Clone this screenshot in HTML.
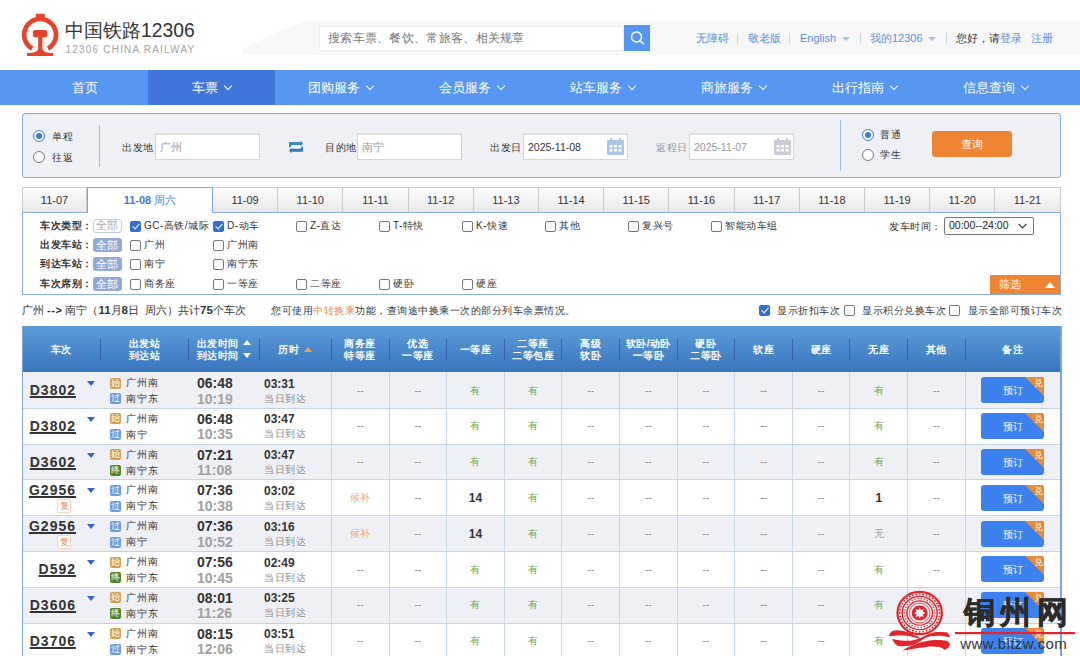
<!DOCTYPE html>
<html><head><meta charset="utf-8">
<style>
*{box-sizing:border-box;margin:0;padding:0}
html,body{width:1080px;height:656px;overflow:hidden;background:#fff}
body{position:relative;font-family:"Liberation Sans",sans-serif;color:#333;font-size:11px}
.abs{position:absolute}
/* header */
#logo-cn{position:absolute;left:65px;top:18px;font-size:19.3px;color:#333;font-weight:500;line-height:26px;white-space:nowrap}
#logo-en{position:absolute;left:65.5px;top:44px;font-size:10px;color:#a3a3a3;letter-spacing:1.2px;line-height:12px;white-space:nowrap}
#band{position:absolute;left:0;top:0}
#search{position:absolute;left:319px;top:26px;width:305px;height:25px;background:#fff;border:1px solid #eee;font-size:12px;letter-spacing:0.3px;color:#777;line-height:22px;padding-left:8px}
#sbtn{position:absolute;left:624px;top:25px;width:26px;height:26px;background:#5596f0}
.tl{position:absolute;top:32px;font-size:11px;line-height:13px;color:#5b8fdc;white-space:nowrap}
.sep{position:absolute;top:33px;width:1px;height:11px;background:#c7d6ee}
.tri{position:absolute;top:37px;width:0;height:0;border-left:4px solid transparent;border-right:4px solid transparent;border-top:4px solid #a9c2ec}
/* nav */
#nav{position:absolute;left:0;top:70px;width:1080px;height:35px;background:#5697f3}
.ni{position:absolute;top:0;height:35px;line-height:35px;color:#fff;font-size:13px;text-align:center;white-space:nowrap}
.ni.act{background:#4076dc}
.chev{display:inline-block;width:6px;height:6px;border-right:1.4px solid #fff;border-bottom:1.4px solid #fff;transform:rotate(45deg);margin-left:7px;position:relative;top:-3px}

/* form */
#form{position:absolute;left:22px;top:113px;width:1039px;height:65px;background:#eff0f5;border:1.5px solid #86ade0;border-radius:3px}
.radio{position:absolute;width:12px;height:12px;border-radius:50%;border:1px solid #777;background:#fff}
.radio.on{border:1px solid #3a7ad8}
.radio.on:after{content:"";position:absolute;left:2px;top:2px;width:6px;height:6px;border-radius:50%;background:#3a7ad8}
.lbl{position:absolute;font-size:10px;letter-spacing:0.5px;line-height:13px;color:#333;white-space:nowrap}
.vdiv{position:absolute;width:1.2px;background:#93bce6}
.inp{position:absolute;height:27px;background:#fff;border:1px solid #d4d4d4;border-top:2px solid #dedede;font-size:10.5px;line-height:24px;padding-left:4px;color:#999;white-space:nowrap}
.cal{position:absolute;width:17px;height:17px}
#qbtn{position:absolute;left:932px;top:131px;width:80px;height:26px;background:#ef8532;border-radius:3px;color:#fff;font-size:11px;text-align:center;line-height:26px}
/* date tabs */
.dt{position:absolute;top:187px;height:26px;border:1px solid #c9c9c9;border-bottom-color:#86ade0;border-left:none;background:linear-gradient(#fdfdfd,#e8e8e8);font-size:11px;line-height:24px;text-align:center;color:#333}
.dt.first{border-left:1px solid #c9c9c9}
.dt.act{background:#fff;border:1px solid #7ea8d8;border-bottom:none;color:#3c7ec9;font-weight:bold;height:26px}
#filter{position:absolute;left:22px;top:212px;width:1039px;height:83px;border:1px solid #86ade0;border-top:none;background:#fff}
.flbl{position:absolute;left:40px;font-size:10px;letter-spacing:0.5px;line-height:13px;color:#333;font-weight:bold;white-space:nowrap}
.all{position:absolute;left:92.5px;width:29px;height:14px;background:#93a9d9;color:#fff;font-size:10.5px;line-height:14px;text-align:center;border-radius:3px;margin-top:-1px}
.all.o{background:#fff;border:1.5px solid #bfcbed;color:#aaa;line-height:11px}
.cb{position:absolute;width:11px;height:11px;border:1px solid #767676;border-radius:2px;background:#fff}
.cb.on{background:#2f6fd6;border-color:#2f6fd6}
.cb.on:after{content:"";position:absolute;left:2.6px;top:0px;width:3.2px;height:6px;border-right:1.8px solid #fff;border-bottom:1.8px solid #fff;transform:rotate(42deg)}
.ct{position:absolute;font-size:10px;letter-spacing:0.5px;line-height:13px;color:#333;white-space:nowrap}
#sel{position:absolute;left:944px;top:217px;width:90px;height:18px;border:1px solid #767676;border-radius:2px;font-size:10.5px;line-height:15px;padding-left:4px;color:#222;background:#fff}
#shai{position:absolute;left:990px;top:275px;width:70px;height:19px;background:#ef8532;color:#fff;font-size:11px;line-height:19px;padding-left:9px}
/* summary */
.sum{position:absolute;top:304px;font-size:10px;letter-spacing:0.5px;line-height:13px;color:#333;white-space:nowrap}

/* table */
#th{position:absolute;left:22px;top:326px;width:1039px;height:46px;background:linear-gradient(#5a9cd9,#3a76be)}
.thc{position:absolute;top:326px;height:46px;display:flex;align-items:center;justify-content:center;text-align:center;color:#fff;font-size:10px;letter-spacing:0.5px;line-height:12.5px;font-weight:bold;white-space:nowrap;padding-top:2px}
.ths{position:absolute;top:339px;width:1px;height:21px;background:#3a61a6}
.row{position:absolute;left:22px;width:1039px}
.hl{position:absolute;left:22px;width:1039px;height:1px;background:#c3d5e2}
.row.g{background:#eff0f5}
.vl{position:absolute;top:372px;width:1px;height:284px;background:#c5d6e6}
.tn{position:absolute;font-size:14px;font-weight:bold;color:#333;text-decoration:underline;text-decoration-thickness:1.5px;text-underline-offset:0.5px;letter-spacing:1px;line-height:16px;white-space:nowrap}
.dtri{position:absolute;width:0;height:0;border-left:4.5px solid transparent;border-right:4.5px solid transparent;border-top:5px solid #2e66d8}
.bdg{position:absolute;left:110px;width:11px;height:11px;border-radius:2px;color:#fff;font-size:9px;line-height:11px;text-align:center;overflow:hidden}
.bs{background:#d1a155}.bz{background:#6b9ddd}.be{background:#54852d}
.st{position:absolute;left:126px;font-size:10px;line-height:13px;color:#333;white-space:nowrap;letter-spacing:1px}
.tm{position:absolute;left:197px;font-size:14px;font-weight:bold;line-height:15px;color:#333;white-space:nowrap}
.tm.a{color:#a0a0a0}
.du{position:absolute;left:264px;font-size:12px;font-weight:bold;line-height:14px;color:#333;white-space:nowrap}
.du.a{font-weight:normal;font-size:10px;letter-spacing:0.5px;color:#888}
.fu{position:absolute;left:57px;width:14px;height:14px;border:1px solid #f6d3b3;border-radius:2px;color:#f08a50;font-size:9px;line-height:12px;text-align:center;background:#fff}
.sc{position:absolute;width:57.7px;text-align:center;font-size:10px;line-height:13px;white-space:nowrap}
.sc.n{color:#888;font-size:10px}
.sc.y{color:#6aaa4a}
.sc.h{color:#f0a070}
.sc.w{color:#999}
.sc.b{color:#333;font-weight:bold;font-size:12px;margin-top:1px}
.bk{position:absolute;left:981px;width:63px;height:26px;background:#3b82f0;border-radius:3px;overflow:hidden;color:#fff;font-size:10px;line-height:28px;text-align:center}
.bk i{position:absolute;right:0;top:0;width:0;height:0;border-top:19px solid #ea8a35;border-left:19px solid transparent}
.bk b{position:absolute;right:1.5px;top:-8px;font-weight:normal;font-size:9px;color:#fff}
.up,.dn{display:inline-block;width:0;height:0;border-left:4.5px solid transparent;border-right:4.5px solid transparent;margin-left:4px;vertical-align:middle;position:relative;top:-1px}
.up{border-bottom:5px solid #fff}
.dn{border-top:5px solid #fff}
</style></head><body>

<!-- header band -->
<svg id="band" width="1080" height="70" viewBox="0 0 1080 70">
  <path d="M1080 21 L318 21 C300 21 290 26 250 45 C238 51 240 55 248 55 L1080 55 Z" fill="#f7f7f7"/>
</svg>
<!-- logo -->
<svg class="abs" style="left:18px;top:10px" width="46" height="50" viewBox="0 0 46 50">
  <g fill="#e5432a">
  <path d="M12.95 40.65 A18.3 18.3 0 1 1 31.25 40.65 L28.9 36.58 A13.6 13.6 0 1 0 15.3 36.58 Z"/>
  <path d="M17.9 3.8 L26.7 3.8 L26.9 8.5 L17.7 8.5 Z"/>
  <rect x="14.85" y="20" width="14.45" height="7.2" rx="2"/>
  <path d="M20.2 26 L24.4 26 L24.4 38.5 C24.6 41.8 28.5 42.9 35.2 43.1 L35.2 46 L9 46 L9 43.1 C15.7 42.9 20 41.8 20.2 38.5 Z"/>
  </g>
</svg>
<div id="logo-cn">中国铁路12306</div>
<div id="logo-en">12306 CHINA RAILWAY</div>

<div id="search">搜索车票、餐饮、常旅客、相关规章</div>
<div id="sbtn"><svg width="26" height="26" viewBox="0 0 26 26"><circle cx="12.5" cy="12" r="5" fill="none" stroke="#fff" stroke-width="1.5"/><path d="M16.2 15.7 L19.5 19" stroke="#fff" stroke-width="1.6" stroke-linecap="round"/></svg></div>

<div class="tl" style="left:696px">无障碍</div>
<div class="sep" style="left:737px"></div>
<div class="tl" style="left:748px">敬老版</div>
<div class="sep" style="left:789px"></div>
<div class="tl" style="left:800px">English</div>
<div class="tri" style="left:842px"></div>
<div class="sep" style="left:860px"></div>
<div class="tl" style="left:870px">我的12306</div>
<div class="tri" style="left:928px"></div>
<div class="sep" style="left:946px"></div>
<div class="tl" style="left:956px;color:#333">您好，请<span style="color:#5b8fdc">登录</span></div>
<div class="tl" style="left:1031px">注册</div>

<div id="nav">
  <div class="ni" style="left:22px;width:126px">首页</div>
  <div class="ni act" style="left:148px;width:127px">车票<i class="chev"></i></div>
  <div class="ni" style="left:275px;width:131px">团购服务<i class="chev"></i></div>
  <div class="ni" style="left:406px;width:131px">会员服务<i class="chev"></i></div>
  <div class="ni" style="left:537px;width:131px">站车服务<i class="chev"></i></div>
  <div class="ni" style="left:668px;width:131px">商旅服务<i class="chev"></i></div>
  <div class="ni" style="left:799px;width:131px">出行指南<i class="chev"></i></div>
  <div class="ni" style="left:930px;width:131px">信息查询<i class="chev"></i></div>
</div>


<div id="form"></div>
<div class="radio on" style="left:33px;top:130px"></div>
<div class="radio" style="left:33px;top:151px"></div>
<div class="lbl" style="left:52px;top:130px">单程</div>
<div class="lbl" style="left:52px;top:151px">往返</div>
<div class="vdiv" style="left:99px;top:125px;height:42px"></div>
<div class="lbl" style="left:122px;top:141px">出发地</div>
<div class="inp" style="left:155px;top:133px;width:105px">广州</div>
<svg class="abs" style="left:283px;top:136px" width="26" height="22" viewBox="0 0 26 22"><defs><linearGradient id="sw" x1="0" y1="0" x2="0" y2="1"><stop offset="0" stop-color="#3f93cc"/><stop offset="1" stop-color="#2d74aa"/></linearGradient></defs><path fill="url(#sw)" d="M6 6 L17.5 6 L17.5 4.4 L20.1 7.5 L17.5 10.3 L17.5 9.1 L9.1 9.1 L6 12 Z M20.1 15.8 L8.4 15.8 L8.4 17.4 L6 14.5 L8.4 11.5 L8.4 12.7 L17.2 12.7 L20.1 9.8 Z"/></svg>
<div class="lbl" style="left:325px;top:141px">目的地</div>
<div class="inp" style="left:357px;top:133px;width:105px">南宁</div>
<div class="lbl" style="left:490px;top:141px">出发日</div>
<div class="inp" style="left:523px;top:133px;width:105px;color:#333">2025-11-08</div>
<svg class="cal" style="left:607px;top:138px" viewBox="0 0 17 17"><rect x="0" y="2" width="17" height="15" rx="1" fill="#a9c6e6"/><rect x="3" y="0" width="2" height="4" fill="#a9c6e6"/><rect x="12" y="0" width="2" height="4" fill="#a9c6e6"/><g fill="#fff"><rect x="2.5" y="7" width="3" height="2.5"/><rect x="7" y="7" width="3" height="2.5"/><rect x="11.5" y="7" width="3" height="2.5"/><rect x="2.5" y="11" width="3" height="2.5"/><rect x="7" y="11" width="3" height="2.5"/><rect x="11.5" y="11" width="3" height="2.5"/></g></svg>
<div class="lbl" style="left:656px;top:141px;color:#999">返程日</div>
<div class="inp" style="left:689px;top:133px;width:105px;color:#999">2025-11-07</div>
<svg class="cal" style="left:774px;top:138px" viewBox="0 0 17 17"><rect x="0" y="2" width="17" height="15" rx="1" fill="#c9ccd4"/><rect x="3" y="0" width="2" height="4" fill="#c9ccd4"/><rect x="12" y="0" width="2" height="4" fill="#c9ccd4"/><g fill="#fff"><rect x="2.5" y="7" width="3" height="2.5"/><rect x="7" y="7" width="3" height="2.5"/><rect x="11.5" y="7" width="3" height="2.5"/><rect x="2.5" y="11" width="3" height="2.5"/><rect x="7" y="11" width="3" height="2.5"/><rect x="11.5" y="11" width="3" height="2.5"/></g></svg>
<div class="vdiv" style="left:840px;top:120px;height:51px"></div>
<div class="radio on" style="left:862px;top:129px"></div>
<div class="radio" style="left:862px;top:149px"></div>
<div class="lbl" style="left:880px;top:128px">普通</div>
<div class="lbl" style="left:880px;top:148px">学生</div>
<div id="qbtn">查询</div>
<div id="filter"></div>
<div class="dt first" style="left:22px;width:65px">11-07</div>
<div class="dt act" style="left:87px;width:126px">11-08 <span style="font-weight:normal">周六</span></div>
<div class="dt" style="left:213.00px;width:65.2px">11-09</div>
<div class="dt" style="left:278.20px;width:65.2px">11-10</div>
<div class="dt" style="left:343.40px;width:65.2px">11-11</div>
<div class="dt" style="left:408.60px;width:65.2px">11-12</div>
<div class="dt" style="left:473.80px;width:65.2px">11-13</div>
<div class="dt" style="left:539.00px;width:65.2px">11-14</div>
<div class="dt" style="left:604.20px;width:65.2px">11-15</div>
<div class="dt" style="left:669.40px;width:65.2px">11-16</div>
<div class="dt" style="left:734.60px;width:65.2px">11-17</div>
<div class="dt" style="left:799.80px;width:65.2px">11-18</div>
<div class="dt" style="left:865.00px;width:65.2px">11-19</div>
<div class="dt" style="left:930.20px;width:65.2px">11-20</div>
<div class="dt" style="left:995.40px;width:65.2px">11-21</div>
<div class="flbl" style="top:219px">车次类型：</div>
<div class="all o" style="top:219.5px">全部</div>
<div class="flbl" style="top:238px">出发车站：</div>
<div class="all" style="top:238.5px">全部</div>
<div class="flbl" style="top:257px">到达车站：</div>
<div class="all" style="top:257.5px">全部</div>
<div class="flbl" style="top:277px">车次席别：</div>
<div class="all" style="top:277.5px">全部</div>
<div class="cb on" style="left:130px;top:220.5px"></div><div class="ct" style="left:144px;top:219px">GC-高铁/城际</div>
<div class="cb on" style="left:213px;top:220.5px"></div><div class="ct" style="left:227px;top:219px">D-动车</div>
<div class="cb" style="left:296px;top:220.5px"></div><div class="ct" style="left:310px;top:219px">Z-直达</div>
<div class="cb" style="left:379px;top:220.5px"></div><div class="ct" style="left:393px;top:219px">T-特快</div>
<div class="cb" style="left:462px;top:220.5px"></div><div class="ct" style="left:476px;top:219px">K-快速</div>
<div class="cb" style="left:545px;top:220.5px"></div><div class="ct" style="left:559px;top:219px">其他</div>
<div class="cb" style="left:628px;top:220.5px"></div><div class="ct" style="left:642px;top:219px">复兴号</div>
<div class="cb" style="left:711px;top:220.5px"></div><div class="ct" style="left:725px;top:219px">智能动车组</div>
<div class="cb" style="left:130px;top:239.5px"></div><div class="ct" style="left:144px;top:238px">广州</div>
<div class="cb" style="left:213px;top:239.5px"></div><div class="ct" style="left:227px;top:238px">广州南</div>
<div class="cb" style="left:130px;top:258.5px"></div><div class="ct" style="left:144px;top:257px">南宁</div>
<div class="cb" style="left:213px;top:258.5px"></div><div class="ct" style="left:227px;top:257px">南宁东</div>
<div class="cb" style="left:130px;top:278.5px"></div><div class="ct" style="left:144px;top:277px">商务座</div>
<div class="cb" style="left:213px;top:278.5px"></div><div class="ct" style="left:227px;top:277px">一等座</div>
<div class="cb" style="left:296px;top:278.5px"></div><div class="ct" style="left:310px;top:277px">二等座</div>
<div class="cb" style="left:379px;top:278.5px"></div><div class="ct" style="left:393px;top:277px">硬卧</div>
<div class="cb" style="left:462px;top:278.5px"></div><div class="ct" style="left:476px;top:277px">硬座</div>
<div class="lbl" style="left:889px;top:220px">发车时间：</div>
<div id="sel">00:00--24:00<svg class="abs" style="right:6px;top:5px" width="9" height="6" viewBox="0 0 9 6"><path d="M0.5 0.8 L4.5 4.8 L8.5 0.8" fill="none" stroke="#333" stroke-width="1.2"/></svg></div>
<div id="shai">筛选<svg class="abs" style="left:55px;top:7px" width="10" height="6" viewBox="0 0 10 6"><path d="M0 6 L5 0 L10 6 Z" fill="#fff"/></svg></div>
<div class="sum" style="left:22px;font-size:11px;letter-spacing:0px;top:303.5px">广州 <b style="letter-spacing:0.5px">--&gt;</b> 南宁（<b style="font-size:11.5px">11</b>月<b style="font-size:11.5px">8</b>日&nbsp; 周六）共计<b style="font-size:11.5px">75</b>个车次</div>
<div class="sum" style="left:271px">您可使用<span style="color:#f08a2e">中转换乘</span>功能，查询途中换乘一次的部分列车余票情况。</div>
<div class="cb on" style="left:759px;top:305px"></div><div class="sum" style="left:777px">显示折扣车次</div>
<div class="cb" style="left:843.5px;top:305px"></div><div class="sum" style="left:862px">显示积分兑换车次</div>
<div class="cb" style="left:949px;top:305px"></div><div class="sum" style="left:967.5px">显示全部可预订车次</div>
<div id="th"></div>
<div class="thc" style="left:22.00px;width:78.50px"><div>车次</div></div>
<div class="thc" style="left:100.50px;width:87.50px"><div>出发站<br>到达站</div></div>
<div class="ths" style="left:100.00px"></div>
<div class="thc" style="left:188.00px;width:71.50px"><div>出发时间<i class="up"></i><br>到达时间<i class="dn"></i></div></div>
<div class="ths" style="left:187.50px"></div>
<div class="thc" style="left:259.50px;width:71.90px"><div>历时<i class="up" style="border-bottom-color:#f0a050;margin-left:5px"></i></div></div>
<div class="ths" style="left:259.00px"></div>
<div class="thc" style="left:331.40px;width:57.62px"><div>商务座<br>特等座</div></div>
<div class="ths" style="left:330.90px"></div>
<div class="thc" style="left:389.02px;width:57.62px"><div>优选<br>一等座</div></div>
<div class="ths" style="left:388.52px"></div>
<div class="thc" style="left:446.64px;width:57.62px"><div>一等座</div></div>
<div class="ths" style="left:446.14px"></div>
<div class="thc" style="left:504.26px;width:57.62px"><div>二等座<br>二等包座</div></div>
<div class="ths" style="left:503.76px"></div>
<div class="thc" style="left:561.88px;width:57.62px"><div>高级<br>软卧</div></div>
<div class="ths" style="left:561.38px"></div>
<div class="thc" style="left:619.50px;width:57.62px"><div>软卧/动卧<br>一等卧</div></div>
<div class="ths" style="left:619.00px"></div>
<div class="thc" style="left:677.12px;width:57.62px"><div>硬卧<br>二等卧</div></div>
<div class="ths" style="left:676.62px"></div>
<div class="thc" style="left:734.74px;width:57.62px"><div>软座</div></div>
<div class="ths" style="left:734.24px"></div>
<div class="thc" style="left:792.36px;width:57.62px"><div>硬座</div></div>
<div class="ths" style="left:791.86px"></div>
<div class="thc" style="left:849.98px;width:57.62px"><div>无座</div></div>
<div class="ths" style="left:849.48px"></div>
<div class="thc" style="left:907.60px;width:57.62px"><div>其他</div></div>
<div class="ths" style="left:907.10px"></div>
<div class="thc" style="left:965.22px;width:94.78px"><div>备注</div></div>
<div class="ths" style="left:964.72px"></div>
<div class="row g" style="top:372.00px;height:36.80px"></div>
<div class="tn" style="right:1004px;top:382.20px">D3802</div>
<div class="dtri" style="left:86.5px;top:381.00px"></div>
<div class="bdg bs" style="top:377.60px">始</div>
<div class="bdg bz" style="top:393.40px">过</div>
<div class="st" style="top:376.00px">广州南</div>
<div class="st" style="top:392.00px">南宁东</div>
<div class="tm" style="top:376.00px">06:48</div>
<div class="tm a" style="top:391.50px">10:19</div>
<div class="du" style="top:376.50px">03:31</div>
<div class="du a" style="top:391.50px">当日到达</div>
<div class="sc n" style="left:331.40px;width:57.62px;top:383.50px">--</div>
<div class="sc n" style="left:389.02px;width:57.62px;top:383.50px">--</div>
<div class="sc y" style="left:446.64px;width:57.62px;top:383.50px">有</div>
<div class="sc y" style="left:504.26px;width:57.62px;top:383.50px">有</div>
<div class="sc n" style="left:561.88px;width:57.62px;top:383.50px">--</div>
<div class="sc n" style="left:619.50px;width:57.62px;top:383.50px">--</div>
<div class="sc n" style="left:677.12px;width:57.62px;top:383.50px">--</div>
<div class="sc n" style="left:734.74px;width:57.62px;top:383.50px">--</div>
<div class="sc n" style="left:792.36px;width:57.62px;top:383.50px">--</div>
<div class="sc y" style="left:849.98px;width:57.62px;top:383.50px">有</div>
<div class="sc n" style="left:907.60px;width:57.62px;top:383.50px">--</div>
<div class="bk" style="top:377.30px">预订<i></i><b>兑</b></div>
<div class="tn" style="right:1004px;top:418.00px">D3802</div>
<div class="dtri" style="left:86.5px;top:416.80px"></div>
<div class="bdg bs" style="top:413.40px">始</div>
<div class="bdg bz" style="top:429.20px">过</div>
<div class="st" style="top:411.80px">广州南</div>
<div class="st" style="top:427.80px">南宁</div>
<div class="tm" style="top:411.80px">06:48</div>
<div class="tm a" style="top:427.30px">10:35</div>
<div class="du" style="top:412.30px">03:47</div>
<div class="du a" style="top:427.30px">当日到达</div>
<div class="sc n" style="left:331.40px;width:57.62px;top:419.30px">--</div>
<div class="sc n" style="left:389.02px;width:57.62px;top:419.30px">--</div>
<div class="sc y" style="left:446.64px;width:57.62px;top:419.30px">有</div>
<div class="sc y" style="left:504.26px;width:57.62px;top:419.30px">有</div>
<div class="sc n" style="left:561.88px;width:57.62px;top:419.30px">--</div>
<div class="sc n" style="left:619.50px;width:57.62px;top:419.30px">--</div>
<div class="sc n" style="left:677.12px;width:57.62px;top:419.30px">--</div>
<div class="sc n" style="left:734.74px;width:57.62px;top:419.30px">--</div>
<div class="sc n" style="left:792.36px;width:57.62px;top:419.30px">--</div>
<div class="sc y" style="left:849.98px;width:57.62px;top:419.30px">有</div>
<div class="sc n" style="left:907.60px;width:57.62px;top:419.30px">--</div>
<div class="bk" style="top:413.10px">预订<i></i><b>兑</b></div>
<div class="row g" style="top:443.60px;height:36.80px"></div>
<div class="tn" style="right:1004px;top:453.80px">D3602</div>
<div class="dtri" style="left:86.5px;top:452.60px"></div>
<div class="bdg bs" style="top:449.20px">始</div>
<div class="bdg be" style="top:465.00px">终</div>
<div class="st" style="top:447.60px">广州南</div>
<div class="st" style="top:463.60px">南宁东</div>
<div class="tm" style="top:447.60px">07:21</div>
<div class="tm a" style="top:463.10px">11:08</div>
<div class="du" style="top:448.10px">03:47</div>
<div class="du a" style="top:463.10px">当日到达</div>
<div class="sc n" style="left:331.40px;width:57.62px;top:455.10px">--</div>
<div class="sc n" style="left:389.02px;width:57.62px;top:455.10px">--</div>
<div class="sc y" style="left:446.64px;width:57.62px;top:455.10px">有</div>
<div class="sc y" style="left:504.26px;width:57.62px;top:455.10px">有</div>
<div class="sc n" style="left:561.88px;width:57.62px;top:455.10px">--</div>
<div class="sc n" style="left:619.50px;width:57.62px;top:455.10px">--</div>
<div class="sc n" style="left:677.12px;width:57.62px;top:455.10px">--</div>
<div class="sc n" style="left:734.74px;width:57.62px;top:455.10px">--</div>
<div class="sc n" style="left:792.36px;width:57.62px;top:455.10px">--</div>
<div class="sc y" style="left:849.98px;width:57.62px;top:455.10px">有</div>
<div class="sc n" style="left:907.60px;width:57.62px;top:455.10px">--</div>
<div class="bk" style="top:448.90px">预订<i></i><b>兑</b></div>
<div class="tn" style="right:1004px;top:482.10px">G2956</div>
<div class="fu" style="top:499.40px">复</div>
<div class="dtri" style="left:86.5px;top:488.40px"></div>
<div class="bdg bz" style="top:485.00px">过</div>
<div class="bdg bz" style="top:500.80px">过</div>
<div class="st" style="top:483.40px">广州南</div>
<div class="st" style="top:499.40px">南宁东</div>
<div class="tm" style="top:483.40px">07:36</div>
<div class="tm a" style="top:498.90px">10:38</div>
<div class="du" style="top:483.90px">03:02</div>
<div class="du a" style="top:498.90px">当日到达</div>
<div class="sc h" style="left:331.40px;width:57.62px;top:490.90px">候补</div>
<div class="sc n" style="left:389.02px;width:57.62px;top:490.90px">--</div>
<div class="sc b" style="left:446.64px;width:57.62px;top:490.90px">14</div>
<div class="sc y" style="left:504.26px;width:57.62px;top:490.90px">有</div>
<div class="sc n" style="left:561.88px;width:57.62px;top:490.90px">--</div>
<div class="sc n" style="left:619.50px;width:57.62px;top:490.90px">--</div>
<div class="sc n" style="left:677.12px;width:57.62px;top:490.90px">--</div>
<div class="sc n" style="left:734.74px;width:57.62px;top:490.90px">--</div>
<div class="sc n" style="left:792.36px;width:57.62px;top:490.90px">--</div>
<div class="sc b" style="left:849.98px;width:57.62px;top:490.90px">1</div>
<div class="sc n" style="left:907.60px;width:57.62px;top:490.90px">--</div>
<div class="bk" style="top:484.70px">预订<i></i><b>兑</b></div>
<div class="row g" style="top:515.20px;height:36.80px"></div>
<div class="tn" style="right:1004px;top:517.90px">G2956</div>
<div class="fu" style="top:535.20px">复</div>
<div class="dtri" style="left:86.5px;top:524.20px"></div>
<div class="bdg bz" style="top:520.80px">过</div>
<div class="bdg bz" style="top:536.60px">过</div>
<div class="st" style="top:519.20px">广州南</div>
<div class="st" style="top:535.20px">南宁</div>
<div class="tm" style="top:519.20px">07:36</div>
<div class="tm a" style="top:534.70px">10:52</div>
<div class="du" style="top:519.70px">03:16</div>
<div class="du a" style="top:534.70px">当日到达</div>
<div class="sc h" style="left:331.40px;width:57.62px;top:526.70px">候补</div>
<div class="sc n" style="left:389.02px;width:57.62px;top:526.70px">--</div>
<div class="sc b" style="left:446.64px;width:57.62px;top:526.70px">14</div>
<div class="sc y" style="left:504.26px;width:57.62px;top:526.70px">有</div>
<div class="sc n" style="left:561.88px;width:57.62px;top:526.70px">--</div>
<div class="sc n" style="left:619.50px;width:57.62px;top:526.70px">--</div>
<div class="sc n" style="left:677.12px;width:57.62px;top:526.70px">--</div>
<div class="sc n" style="left:734.74px;width:57.62px;top:526.70px">--</div>
<div class="sc n" style="left:792.36px;width:57.62px;top:526.70px">--</div>
<div class="sc w" style="left:849.98px;width:57.62px;top:526.70px">无</div>
<div class="sc n" style="left:907.60px;width:57.62px;top:526.70px">--</div>
<div class="bk" style="top:520.50px">预订<i></i><b>兑</b></div>
<div class="tn" style="right:1004px;top:561.20px">D592</div>
<div class="dtri" style="left:86.5px;top:560.00px"></div>
<div class="bdg bs" style="top:556.60px">始</div>
<div class="bdg be" style="top:572.40px">终</div>
<div class="st" style="top:555.00px">广州南</div>
<div class="st" style="top:571.00px">南宁东</div>
<div class="tm" style="top:555.00px">07:56</div>
<div class="tm a" style="top:570.50px">10:45</div>
<div class="du" style="top:555.50px">02:49</div>
<div class="du a" style="top:570.50px">当日到达</div>
<div class="sc n" style="left:331.40px;width:57.62px;top:562.50px">--</div>
<div class="sc n" style="left:389.02px;width:57.62px;top:562.50px">--</div>
<div class="sc y" style="left:446.64px;width:57.62px;top:562.50px">有</div>
<div class="sc y" style="left:504.26px;width:57.62px;top:562.50px">有</div>
<div class="sc n" style="left:561.88px;width:57.62px;top:562.50px">--</div>
<div class="sc n" style="left:619.50px;width:57.62px;top:562.50px">--</div>
<div class="sc n" style="left:677.12px;width:57.62px;top:562.50px">--</div>
<div class="sc n" style="left:734.74px;width:57.62px;top:562.50px">--</div>
<div class="sc n" style="left:792.36px;width:57.62px;top:562.50px">--</div>
<div class="sc y" style="left:849.98px;width:57.62px;top:562.50px">有</div>
<div class="sc n" style="left:907.60px;width:57.62px;top:562.50px">--</div>
<div class="bk" style="top:556.30px">预订<i></i><b>兑</b></div>
<div class="row g" style="top:586.80px;height:36.80px"></div>
<div class="tn" style="right:1004px;top:597.00px">D3606</div>
<div class="dtri" style="left:86.5px;top:595.80px"></div>
<div class="bdg bs" style="top:592.40px">始</div>
<div class="bdg be" style="top:608.20px">终</div>
<div class="st" style="top:590.80px">广州南</div>
<div class="st" style="top:606.80px">南宁东</div>
<div class="tm" style="top:590.80px">08:01</div>
<div class="tm a" style="top:606.30px">11:26</div>
<div class="du" style="top:591.30px">03:25</div>
<div class="du a" style="top:606.30px">当日到达</div>
<div class="sc n" style="left:331.40px;width:57.62px;top:598.30px">--</div>
<div class="sc n" style="left:389.02px;width:57.62px;top:598.30px">--</div>
<div class="sc y" style="left:446.64px;width:57.62px;top:598.30px">有</div>
<div class="sc y" style="left:504.26px;width:57.62px;top:598.30px">有</div>
<div class="sc n" style="left:561.88px;width:57.62px;top:598.30px">--</div>
<div class="sc n" style="left:619.50px;width:57.62px;top:598.30px">--</div>
<div class="sc n" style="left:677.12px;width:57.62px;top:598.30px">--</div>
<div class="sc n" style="left:734.74px;width:57.62px;top:598.30px">--</div>
<div class="sc n" style="left:792.36px;width:57.62px;top:598.30px">--</div>
<div class="sc y" style="left:849.98px;width:57.62px;top:598.30px">有</div>
<div class="sc n" style="left:907.60px;width:57.62px;top:598.30px">--</div>
<div class="bk" style="top:592.10px">预订<i></i><b>兑</b></div>
<div class="tn" style="right:1004px;top:632.80px">D3706</div>
<div class="dtri" style="left:86.5px;top:631.60px"></div>
<div class="bdg bs" style="top:628.20px">始</div>
<div class="bdg bz" style="top:644.00px">过</div>
<div class="st" style="top:626.60px">广州南</div>
<div class="st" style="top:642.60px">南宁东</div>
<div class="tm" style="top:626.60px">08:15</div>
<div class="tm a" style="top:642.10px">12:06</div>
<div class="du" style="top:627.10px">03:51</div>
<div class="du a" style="top:642.10px">当日到达</div>
<div class="sc n" style="left:331.40px;width:57.62px;top:634.10px">--</div>
<div class="sc n" style="left:389.02px;width:57.62px;top:634.10px">--</div>
<div class="sc y" style="left:446.64px;width:57.62px;top:634.10px">有</div>
<div class="sc y" style="left:504.26px;width:57.62px;top:634.10px">有</div>
<div class="sc n" style="left:561.88px;width:57.62px;top:634.10px">--</div>
<div class="sc n" style="left:619.50px;width:57.62px;top:634.10px">--</div>
<div class="sc n" style="left:677.12px;width:57.62px;top:634.10px">--</div>
<div class="sc n" style="left:734.74px;width:57.62px;top:634.10px">--</div>
<div class="sc n" style="left:792.36px;width:57.62px;top:634.10px">--</div>
<div class="sc y" style="left:849.98px;width:57.62px;top:634.10px">有</div>
<div class="sc n" style="left:907.60px;width:57.62px;top:634.10px">--</div>
<div class="bk" style="top:627.90px">预订<i></i><b>兑</b></div>
<div class="hl" style="top:407.80px"></div>
<div class="hl" style="top:443.60px"></div>
<div class="hl" style="top:479.40px"></div>
<div class="hl" style="top:515.20px"></div>
<div class="hl" style="top:551.00px"></div>
<div class="hl" style="top:586.80px"></div>
<div class="hl" style="top:622.60px"></div>
<div class="hl" style="top:658.40px"></div>
<div class="vl" style="left:330.90px"></div>
<div class="vl" style="left:388.52px"></div>
<div class="vl" style="left:446.14px"></div>
<div class="vl" style="left:503.76px"></div>
<div class="vl" style="left:561.38px"></div>
<div class="vl" style="left:619.00px"></div>
<div class="vl" style="left:676.62px"></div>
<div class="vl" style="left:734.24px"></div>
<div class="vl" style="left:791.86px"></div>
<div class="vl" style="left:849.48px"></div>
<div class="vl" style="left:907.10px"></div>
<div class="vl" style="left:964.72px"></div>
<div class="abs" style="left:22px;top:326px;width:1px;height:330px;background:#7aa6d8"></div>
<div class="abs" style="left:1060px;top:326px;width:1.5px;height:330px;background:#7aa6d8"></div>
<svg class="abs" style="left:880px;top:585px" width="200" height="71" viewBox="0 0 200 71">
 <g transform="translate(39.7,28) scale(1,0.95)" fill="none" stroke="#e3242b">
  <circle r="22.2" stroke-width="2.2"/>
  <circle r="17.5" stroke-width="1.4"/>
  <circle r="12.8" stroke-width="1.4"/>
  <circle r="10.4" stroke-width="0.8"/>
  <g fill="#e3242b" stroke="none"><circle cx="19.90" cy="0.00" r="0.95"/><circle cx="19.60" cy="3.46" r="0.95"/><circle cx="18.70" cy="6.81" r="0.95"/><circle cx="17.23" cy="9.95" r="0.95"/><circle cx="15.24" cy="12.79" r="0.95"/><circle cx="12.79" cy="15.24" r="0.95"/><circle cx="9.95" cy="17.23" r="0.95"/><circle cx="6.81" cy="18.70" r="0.95"/><circle cx="3.46" cy="19.60" r="0.95"/><circle cx="0.00" cy="19.90" r="0.95"/><circle cx="-3.46" cy="19.60" r="0.95"/><circle cx="-6.81" cy="18.70" r="0.95"/><circle cx="-9.95" cy="17.23" r="0.95"/><circle cx="-12.79" cy="15.24" r="0.95"/><circle cx="-15.24" cy="12.79" r="0.95"/><circle cx="-17.23" cy="9.95" r="0.95"/><circle cx="-18.70" cy="6.81" r="0.95"/><circle cx="-19.60" cy="3.46" r="0.95"/><circle cx="-19.90" cy="0.00" r="0.95"/><circle cx="-19.60" cy="-3.46" r="0.95"/><circle cx="-18.70" cy="-6.81" r="0.95"/><circle cx="-17.23" cy="-9.95" r="0.95"/><circle cx="-15.24" cy="-12.79" r="0.95"/><circle cx="-12.79" cy="-15.24" r="0.95"/><circle cx="-9.95" cy="-17.23" r="0.95"/><circle cx="-6.81" cy="-18.70" r="0.95"/><circle cx="-3.46" cy="-19.60" r="0.95"/><circle cx="-0.00" cy="-19.90" r="0.95"/><circle cx="3.46" cy="-19.60" r="0.95"/><circle cx="6.81" cy="-18.70" r="0.95"/><circle cx="9.95" cy="-17.23" r="0.95"/><circle cx="12.79" cy="-15.24" r="0.95"/><circle cx="15.24" cy="-12.79" r="0.95"/><circle cx="17.23" cy="-9.95" r="0.95"/><circle cx="18.70" cy="-6.81" r="0.95"/><circle cx="19.60" cy="-3.46" r="0.95"/><circle cx="15.10" cy="0.00" r="0.8"/><circle cx="14.77" cy="3.14" r="0.8"/><circle cx="13.79" cy="6.14" r="0.8"/><circle cx="12.22" cy="8.88" r="0.8"/><circle cx="10.10" cy="11.22" r="0.8"/><circle cx="7.55" cy="13.08" r="0.8"/><circle cx="4.67" cy="14.36" r="0.8"/><circle cx="1.58" cy="15.02" r="0.8"/><circle cx="-1.58" cy="15.02" r="0.8"/><circle cx="-4.67" cy="14.36" r="0.8"/><circle cx="-7.55" cy="13.08" r="0.8"/><circle cx="-10.10" cy="11.22" r="0.8"/><circle cx="-12.22" cy="8.88" r="0.8"/><circle cx="-13.79" cy="6.14" r="0.8"/><circle cx="-14.77" cy="3.14" r="0.8"/><circle cx="-15.10" cy="0.00" r="0.8"/><circle cx="-14.77" cy="-3.14" r="0.8"/><circle cx="-13.79" cy="-6.14" r="0.8"/><circle cx="-12.22" cy="-8.88" r="0.8"/><circle cx="-10.10" cy="-11.22" r="0.8"/><circle cx="-7.55" cy="-13.08" r="0.8"/><circle cx="-4.67" cy="-14.36" r="0.8"/><circle cx="-1.58" cy="-15.02" r="0.8"/><circle cx="1.58" cy="-15.02" r="0.8"/><circle cx="4.67" cy="-14.36" r="0.8"/><circle cx="7.55" cy="-13.08" r="0.8"/><circle cx="10.10" cy="-11.22" r="0.8"/><circle cx="12.22" cy="-8.88" r="0.8"/><circle cx="13.79" cy="-6.14" r="0.8"/><circle cx="14.77" cy="-3.14" r="0.8"/><circle r="8"/></g>
  <polygon points="0.00,-5.80 1.26,-3.05 4.10,-4.10 3.05,-1.26 5.80,0.00 3.05,1.26 4.10,4.10 1.26,3.05 0.00,5.80 -1.26,3.05 -4.10,4.10 -3.05,1.26 -5.80,0.00 -3.05,-1.26 -4.10,-4.10 -1.26,-3.05" fill="#fff" stroke="none"/>
 </g>
 <g fill="#e3242b">
  <path d="M8.9 50.9 C10 47 12 45.6 14.7 45.4 C18 45.2 21 45.6 24.4 46.3 C28 47.2 31 48.4 34.2 49.9 C36.5 51 38.5 52 40.6 53.1 L38 53.5 C37 53.2 36.5 53 36.1 52.8 C32 51.6 28 50.9 24.4 50.6 C19 50.2 14 50.4 11.5 51.2 Z"/>
  <path d="M12.1 53.8 C18 55.5 25 56.2 30.9 55.7 C36 55.2 40 53 43.9 51.2 C48 49.2 52 47.3 56.8 47 C61 46.7 65 47 66.6 47.3 C68.5 48.5 69.5 50.5 69.8 52.5 C64 50.5 57 50.3 50.4 51.2 C44 52.5 40 57 34.2 59.6 C29 61.6 22 61.5 18 60.9 C15 59.5 13 56.5 12.1 53.8 Z"/>
  <path d="M22.5 65.5 C26 63 28.5 61.8 30.9 60.9 C38 58 46 55.8 53.6 55.1 C58 54.7 63 54.8 66.6 55.7 C69 57 70 58.5 69.8 59.6 C69.5 62 67 64.5 64.6 64.8 C63 63.5 62 62.6 60.1 62.2 C54 61.2 48 61.5 43.9 62.2 C36 63.2 28 65 22.5 65.5 Z"/>
 </g>
 <text x="83.5" y="37.5" font-family="Liberation Sans" font-weight="bold" font-size="31" fill="#2b2b2b" stroke="#2b2b2b" stroke-width="0.5" letter-spacing="5.5">铜州网</text>
 <rect x="75" y="47" width="120" height="2.2" fill="#e3242b"/>
 <text x="80.3" y="63.5" font-family="Liberation Sans" font-size="15" fill="#333" letter-spacing="0.4">www.bltzw.com</text>
</svg>
</body></html>
